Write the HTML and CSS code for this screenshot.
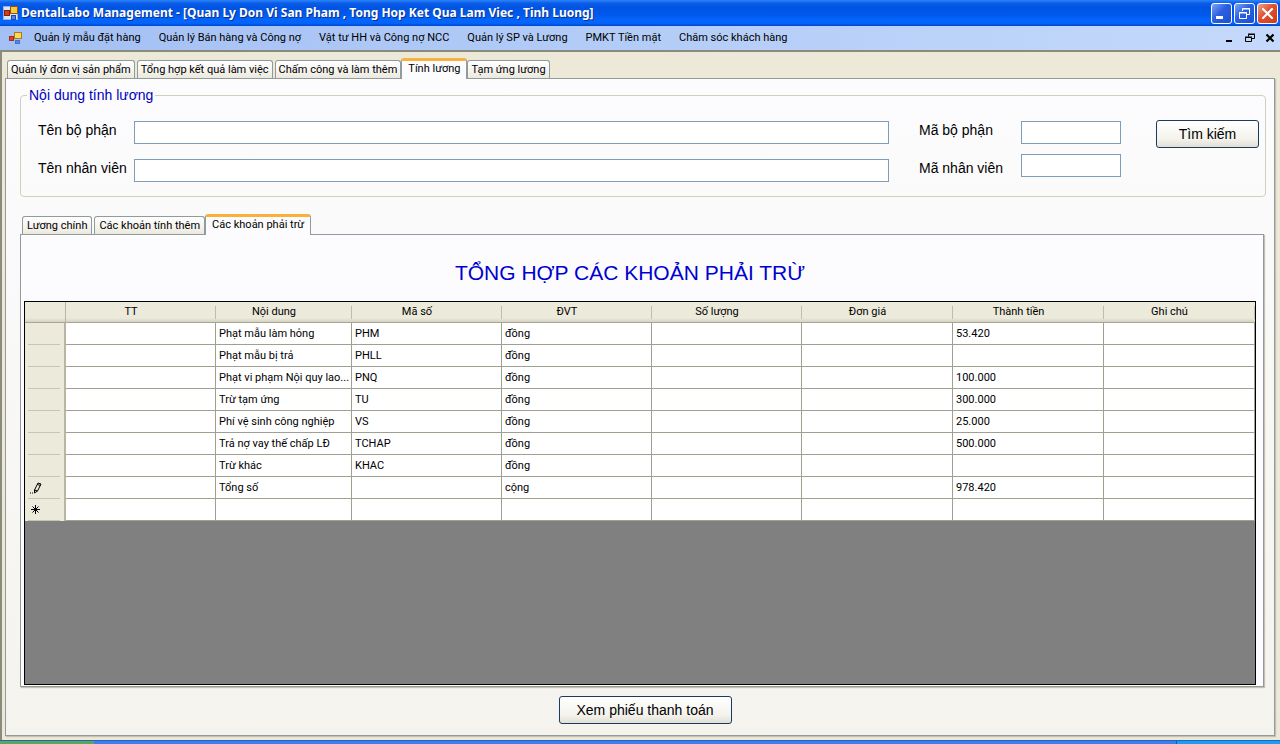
FILE: index.html
```html
<!DOCTYPE html>
<html lang="vi">
<head>
<meta charset="utf-8">
<title>DentalLabo Management</title>
<link rel="stylesheet" href="styles.css">
</head>
<body>
<header class="titlebar">
  <svg class="app-icon" width="16" height="16" viewBox="0 0 16 16"><rect x="0.5" y="1.5" width="14" height="13" fill="#d7e5fa" stroke="#8fb0e8"/><rect x="1.5" y="5.5" width="5" height="5" fill="#d43a1c" stroke="#8a1c08"/><rect x="7.5" y="1.5" width="7" height="7" fill="#f8c840" stroke="#8a5a10"/><rect x="8.5" y="10.5" width="4" height="4" fill="#4f82e8" stroke="#2448a8"/></svg>
  <h1 class="title">DentalLabo Management - [Quan Ly Don Vi San Pham , Tong Hop Ket Qua Lam Viec , Tinh Luong]</h1>
  <div class="window-buttons">
    <button class="winbtn" aria-label="Minimize"><svg width="19" height="19" viewBox="0 0 19 19"><path d="M4 13.500h7" stroke="#fff" stroke-width="3"/></svg></button>
    <button class="winbtn" aria-label="Restore"><svg width="19" height="19" viewBox="0 0 19 19" fill="none" stroke="#fff"><path d="M7.500 7V4.500h7v6H12M7 5h8"/><path d="M4.500 8.500h7v6h-7zM4 9h8"/></svg></button>
    <button class="winbtn winbtn-close" aria-label="Close"><svg width="19" height="19" viewBox="0 0 19 19"><path d="M5 5l9 9M14 5l-9 9" stroke="#fff" stroke-width="2.200" stroke-linecap="round"/></svg></button>
  </div>
</header>
<nav class="menubar">
  <svg class="menu-icon" width="14" height="12" viewBox="0 0 14 12"><rect x=".5" y="4.500" width="4" height="4" fill="#e04020" stroke="#a03018"/><rect x="5.500" y=".5" width="7" height="6" fill="#ffd858" stroke="#b07818"/><rect x="6.500" y="8.500" width="4" height="3" fill="#5088f0" stroke="#4070d0"/></svg>
  <div class="menu-items">
    <button class="menu-item">Quản lý mẫu đặt hàng</button>
    <button class="menu-item">Quản lý Bán hàng và Công nợ</button>
    <button class="menu-item">Vật tư HH và Công nợ NCC</button>
    <button class="menu-item">Quản lý SP và Lương</button>
    <button class="menu-item">PMKT Tiền mặt</button>
    <button class="menu-item">Chăm sóc khách hàng</button>
  </div>
  <div class="child-buttons">
    <button class="childbtn" aria-label="Minimize document"><svg width="10" height="10" viewBox="0 0 10 10"><path d="M1 8h6" stroke="#000" stroke-width="2"/></svg></button>
    <button class="childbtn" aria-label="Restore document"><svg width="10" height="10" viewBox="0 0 10 10" fill="none" stroke="#000"><path d="M3.500 3.500V1.500h6v4H7M3 1h7M.5 4.500h6v4h-6zM0 4h7"/></svg></button>
    <button class="childbtn" aria-label="Close document"><svg width="10" height="10" viewBox="0 0 10 10"><path d="M1.500 1.500l7 7M8.500 1.500l-7 7" stroke="#000" stroke-width="2.200"/></svg></button>
  </div>
</nav>
<main class="workspace">
  <div class="tabs" role="tablist">
    <button class="tab" role="tab">Quản lý đơn vị sản phẩm</button>
    <button class="tab" role="tab">Tổng hợp kết quả làm việc</button>
    <button class="tab" role="tab">Chấm công và làm thêm</button>
    <button class="tab tab-active" role="tab" aria-selected="true">Tính lương</button>
    <button class="tab" role="tab">Tạm ứng lương</button>
  </div>
  <section class="page">
    <fieldset class="search">
      <legend class="search-legend">Nội dung tính lương</legend>
      <div class="search-row">
        <div class="labels"><label for="dept">Tên bộ phận</label><label for="emp">Tên nhân viên</label></div>
        <div class="fields fields-wide"><input class="field" id="dept" type="text"><input class="field" id="emp" type="text"></div>
        <div class="labels labels-code"><label for="dept-code">Mã bộ phận</label><label for="emp-code">Mã nhân viên</label></div>
        <div class="fields fields-code"><input class="field" id="dept-code" type="text"><input class="field" id="emp-code" type="text"></div>
        <button class="button button-search">Tìm kiếm</button>
      </div>
    </fieldset>
    <div class="tabs subtabs" role="tablist">
      <button class="tab" role="tab">Lương chính</button>
      <button class="tab" role="tab">Các khoản tính thêm</button>
      <button class="tab tab-active" role="tab" aria-selected="true">Các khoản phải trừ</button>
    </div>
    <section class="subpage">
      <h2 class="heading">TỔNG HỢP CÁC KHOẢN PHẢI TRỪ</h2>
      <div class="grid-frame">
        <table class="grid">
          <colgroup><col class="col-mark"><col class="col-std"><col class="col-name"><col class="col-std"><col class="col-std"><col class="col-std"><col class="col-wide"><col class="col-wide"><col class="col-wide"></colgroup>
          <thead><tr><th class="corner"></th><th>TT</th><th>Nội dung</th><th>Mã số</th><th>ĐVT</th><th>Số lượng</th><th>Đơn giá</th><th>Thành tiền</th><th>Ghi chú</th></tr></thead>
          <tbody>
            <tr><th></th><td></td><td>Phạt mẫu làm hỏng</td><td>PHM</td><td>đồng</td><td></td><td></td><td>53.420</td><td></td></tr>
            <tr><th></th><td></td><td>Phạt mẫu bị trả</td><td>PHLL</td><td>đồng</td><td></td><td></td><td></td><td></td></tr>
            <tr><th></th><td></td><td>Phạt vi phạm Nội quy lao...</td><td>PNQ</td><td>đồng</td><td></td><td></td><td>100.000</td><td></td></tr>
            <tr><th></th><td></td><td>Trừ tạm ứng</td><td>TU</td><td>đồng</td><td></td><td></td><td>300.000</td><td></td></tr>
            <tr><th></th><td></td><td>Phí vệ sinh công nghiệp</td><td>VS</td><td>đồng</td><td></td><td></td><td>25.000</td><td></td></tr>
            <tr><th></th><td></td><td>Trả nợ vay thế chấp LĐ</td><td>TCHAP</td><td>đồng</td><td></td><td></td><td>500.000</td><td></td></tr>
            <tr><th></th><td></td><td>Trừ khác</td><td>KHAC</td><td>đồng</td><td></td><td></td><td></td><td></td></tr>
            <tr><th><svg class="mark" width="12" height="12" viewBox="0 0 12 12" fill="none" stroke="#000"><path d="M0 11h1M2 11h1" stroke-width="1.200"/><path d="M4.500 11V8l3.500-7 3 1-3.500 7zM4.500 8l3 1M7.500 2.500l3 1"/></svg></th><td></td><td>Tổng số</td><td></td><td>cộng</td><td></td><td></td><td>978.420</td><td></td></tr>
            <tr><th><svg class="mark" width="12" height="12" viewBox="0 0 12 12" stroke="#000"><path d="M5.500 1v9M1 5.500h9M2.500 2.500l6 6M8.500 2.500l-6 6"/></svg></th><td></td><td></td><td></td><td></td><td></td><td></td><td></td><td></td></tr>
          </tbody>
        </table>
      </div>
    </section>
    <div class="actions"><button class="button button-print">Xem phiếu thanh toán</button></div>
  </section>
</main>
<footer class="taskbar"><div class="start"></div><div class="tray"></div></footer>
</body>
</html>
```
FILE: styles.css
```css
* { box-sizing: border-box; }
body {
  margin: 0;
  min-height: 100vh;
  display: flex;
  flex-direction: column;
  background: #ece9d8;
  color: #000;
  font: 11px/14px Roboto, "Liberation Sans", sans-serif;
}
button { font: inherit; color: inherit; margin: 0; padding: 0; border: 0; background: none; }
svg { display: block; }

.titlebar {
  display: flex;
  align-items: center;
  height: 26px;
  padding: 0 2px 0 3px;
  background: linear-gradient(#2c86fa 0, #0b5ce8 12%, #0054e3 30%, #0058ec 55%, #0566fe 80%, #0262f8 90%, #0046cc 100%);
}
.title {
  flex: 1;
  margin: 0 0 0 2px;
  color: #fff;
  font: bold 12px/16px "Noto Sans", sans-serif;
  text-shadow: 1px 1px #0a2f8c;
  white-space: nowrap;
}
.window-buttons { display: flex; gap: 2px; }
.winbtn {
  width: 21px;
  height: 21px;
  border: 1px solid #fff;
  border-radius: 3px;
  background: linear-gradient(135deg, #7fa4f4, #2a60e0 45%, #1c50d4);
}
.winbtn-close { background: linear-gradient(135deg, #f0a088, #e05030 45%, #cc3c14); }

.menubar {
  display: flex;
  align-items: center;
  height: 24px;
  padding: 0 5px 0 9px;
  background: linear-gradient(90deg, #a3c0f4, #c4d9fb);
}
.menu-items { flex: 1; display: flex; gap: 18px; margin-left: 11px; }
.menu-item { white-space: nowrap; }
.child-buttons { display: flex; gap: 10px; }

.workspace {
  flex: 1;
  display: flex;
  flex-direction: column;
  padding: 6px 5px 4px 3px;
  border-left: 2px solid #8c8a78;
  border-top: 2px solid #8c8a78;
  background: #ece9d8;
}
.tabs { display: flex; align-items: flex-end; height: 20px; padding-left: 2px; gap: 2px; }
.tab {
  height: 18px;
  padding: 0 3px;
  border: 1px solid #919b9c;
  border-bottom: 0;
  border-radius: 3px 3px 0 0;
  background: linear-gradient(#fff, #f4f3ee 60%, #ebe9dd);
  white-space: nowrap;
}
.tab-active {
  position: relative;
  height: 21px;
  margin: 0 -2px -1px;
  padding: 0 6px 3px;
  border-top: 3px solid #f9b13c;
  background: #fcfcfe;
}
.page {
  flex: 1;
  display: flex;
  flex-direction: column;
  padding: 8px 8px 11px 14px;
  border: 1px solid #919b9c;
  box-shadow: 1px 1px 1px #c5c2b0;
  background: linear-gradient(#fcfcfe, #f4f3ee);
}
.search {
  min-width: 0;
  margin: 0;
  padding: 17px 6px 14px 17px;
  border: 1px solid #d0d0bf;
  border-radius: 4px;
  font-family: "Liberation Sans", Arial, sans-serif;
  font-size: 14px;
  line-height: 16px;
}
.search-legend { padding: 0 2px; margin-left: -11px; color: #0000c0; }
.search-row { display: flex; align-items: flex-start; }
.labels { display: flex; flex-direction: column; gap: 22px; width: 96px; padding-top: 2px; white-space: nowrap; }
.labels-code { width: 102px; margin-left: 30px; }
.fields { display: flex; flex-direction: column; margin-top: 1px; }
.fields-wide { flex: 1; gap: 15px; }
.fields-code { width: 100px; gap: 10px; }
.field { width: 100%; height: 23px; padding: 1px 3px; border: 1px solid #7f9db9; background: #fff; font: inherit; }
.button {
  height: 28px;
  border: 1px solid #1c3a60;
  border-radius: 3px;
  background: linear-gradient(#fff, #f3f2ec 70%, #e2dfd2);
  font-family: "Liberation Sans", Arial, sans-serif;
  font-size: 14px;
  line-height: 16px;
}
.button-search { width: 103px; margin-left: 35px; }

.subtabs { margin-top: 17px; }
.subtabs .tab { padding-left: 4px; padding-right: 4px; }
.subtabs .tab-active { padding-left: 6px; padding-right: 6px; }
.subpage {
  flex: 1;
  display: flex;
  flex-direction: column;
  margin-right: 2px;
  padding: 0 7px 1px 3px;
  border: 1px solid #919b9c;
  box-shadow: 1px 1px 1px #c5c2b0;
  background: #fcfcfe;
}
.heading {
  margin: 26px 0 16px;
  padding-right: 20px;
  text-align: center;
  color: #0000d0;
  font-family: "Liberation Sans", Arial, sans-serif;
  font-size: 21px;
  line-height: 24px;
  font-weight: normal;
}
.grid-frame { flex: 1; padding-right: 1px; border: 1px solid #000; background: #808080; }
.grid { width: 100%; table-layout: fixed; border-collapse: separate; border-spacing: 0; background: #fff; }
.col-mark { width: 41px; }
.col-name { width: 136px; }
.col-std { width: 150px; }
.col-wide { width: 151px; }
.grid th, .grid td { height: 22px; padding: 0 3px; overflow: hidden; white-space: nowrap; font-weight: normal; }
.grid td { border-right: 1px solid #a0a090; border-bottom: 1px solid #a0a090; text-align: left; }
.grid thead th {
  height: 21px;
  padding-right: 23px;
  border-bottom: 1px solid #a8a594;
  background:
    linear-gradient(#c0bdac, #c0bdac) right center / 1px 13px no-repeat,
    linear-gradient(#ebeadb 80%, #d6d2c2);
}
.grid thead .corner { border-right: 1px solid #b8b5a4; background: linear-gradient(#ebeadb 80%, #d6d2c2); }
.grid tbody th {
  border-right: 2px solid #b8b5a4;
  background: linear-gradient(#c8c5b4, #c8c5b4) 3px 100% / 32px 1px no-repeat, #ebeadb;
}
.mark { margin-left: 2px; }
.actions { display: flex; justify-content: center; margin-top: 9px; padding-left: 4px; }
.button-print { width: 173px; }
.taskbar { display: flex; justify-content: space-between; height: 4px; background: #3b80ea; border-top: 1px solid #2460c8; }
.start { width: 94px; background: #58a858; }
.tray { width: 104px; background: #18a0f0; border-left: 1px solid #1060a8; }
```
